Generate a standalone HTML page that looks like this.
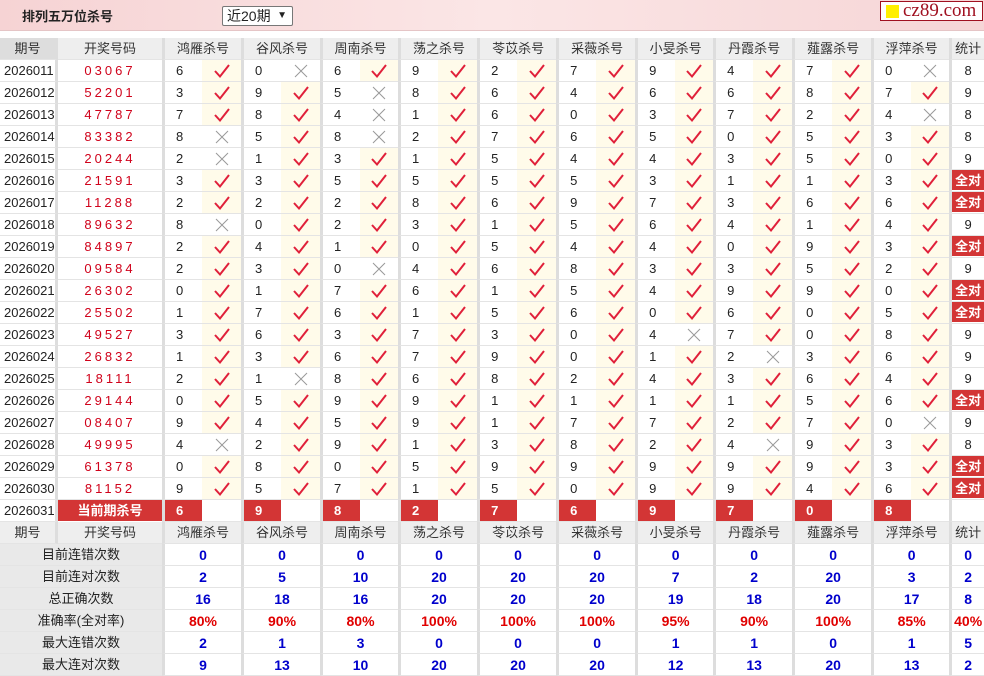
<!DOCTYPE html>
<html><head><meta charset="utf-8">
<style>
*{margin:0;padding:0;box-sizing:border-box}
body{width:984px;height:676px;background:#fff;font-family:"Liberation Sans","Noto Sans CJK SC",sans-serif;font-size:13px;color:#222;overflow:hidden;position:relative}
.bar{position:absolute;left:0;top:0;width:984px;height:31px;background:linear-gradient(90deg,#f6d3d4,#fbe6e6 50%,#f6d5d6);border-bottom:1px solid #e5c5c6}
.title{position:absolute;left:22px;top:6px;font-weight:bold;font-size:13px;color:#222}
.sel{position:absolute;left:222px;top:6px;width:71px;height:20px;border:1px solid #777;background:#fff;border-radius:2px;font-size:14px;padding-left:4px;line-height:18px}
.sel b{position:absolute;right:5px;top:0;font-size:10px}
.logo{position:absolute;left:880px;top:1px;width:103px;height:20px;border:1px solid #a01020;background:#fff;font-family:"Liberation Serif",serif;font-size:19px;color:#a01020;line-height:18px;padding-left:22px}
.logo i{position:absolute;left:5px;top:3px;width:13px;height:13px;background:#ffef00}
table{position:absolute;left:0;top:38px;border-collapse:separate;border-spacing:0;table-layout:fixed;width:984px}
tr{height:22px}
td{height:22px;border-bottom:1px solid #e4e4e4;text-align:center;padding:0;white-space:nowrap;line-height:20px;overflow:hidden}
td.g{border-left:3px solid #ddd;text-align:left;padding-left:11px}
td.m{background:#fffbea}
td.x{background:#fff}
td.q{color:#d0021b;letter-spacing:3px}
td.p{border-right:3px solid #ddd;text-align:left;padding-left:4px}
tr.h td{background:#eee;color:#333}
tr.h td.g{text-align:center;padding-left:0}
tr.h td.p{background:#ddd;text-align:center;padding-left:0}
td.t{border-left:3px solid #ddd}
td.qd{background:#d33535;color:#fff;font-weight:bold;box-shadow:inset 0 -1px 0 #fff}
td.r{background:#d33535;color:#fff;font-weight:bold}
td.cur{background:#d33535;color:#fff;font-weight:bold;border-bottom:1px solid #fff}
td.lab{background:#e9e9e9;padding-left:0}
td.v{border-left:3px solid #ddd;color:#0000cc;font-weight:bold;font-size:14px}
td.vr{border-left:3px solid #ddd;color:#e00000;font-weight:bold;font-size:14px}
td svg{vertical-align:middle;display:inline-block}
</style></head><body>
<div class="bar"></div>
<div class="title">排列五万位杀号</div>
<div class="sel">近20期<b>&#9660;</b></div>
<div class="logo"><i></i>cz89.com</div>
<svg width="0" height="0" style="position:absolute"><defs>
<symbol id="k" viewBox="0 0 20 16"><path d="M3 8 L8 13.5 L17 2" fill="none" stroke="#e0203a" stroke-width="2"/></symbol>
<symbol id="c" viewBox="0 0 16 16"><path d="M2 2 L14 14 M14 2 L2 14" fill="none" stroke="#999" stroke-width="1"/></symbol>
</defs></svg>
<table>
<colgroup><col style="width:58px"><col style="width:104px"><col style="width:40px"><col style="width:39px"><col style="width:40px"><col style="width:39px"><col style="width:40px"><col style="width:38px"><col style="width:40px"><col style="width:39px"><col style="width:40px"><col style="width:39px"><col style="width:40px"><col style="width:39px"><col style="width:40px"><col style="width:38px"><col style="width:40px"><col style="width:39px"><col style="width:40px"><col style="width:39px"><col style="width:40px"><col style="width:38px"><col style="width:35px"></colgroup>
<tr class="h"><td class="p">期号</td><td>开奖号码</td><td class="g" colspan="2">鸿雁杀号</td><td class="g" colspan="2">谷风杀号</td><td class="g" colspan="2">周南杀号</td><td class="g" colspan="2">荡之杀号</td><td class="g" colspan="2">苓苡杀号</td><td class="g" colspan="2">采薇杀号</td><td class="g" colspan="2">小旻杀号</td><td class="g" colspan="2">丹霞杀号</td><td class="g" colspan="2">薤露杀号</td><td class="g" colspan="2">浮萍杀号</td><td class="t">统计</td></tr>
<tr><td class="p">2026011</td><td class="q">03067</td><td class="g">6</td><td class="m"><svg width="20" height="16"><use href="#k"/></svg></td><td class="g">0</td><td class="x"><svg width="16" height="16"><use href="#c"/></svg></td><td class="g">6</td><td class="m"><svg width="20" height="16"><use href="#k"/></svg></td><td class="g">9</td><td class="m"><svg width="20" height="16"><use href="#k"/></svg></td><td class="g">2</td><td class="m"><svg width="20" height="16"><use href="#k"/></svg></td><td class="g">7</td><td class="m"><svg width="20" height="16"><use href="#k"/></svg></td><td class="g">9</td><td class="m"><svg width="20" height="16"><use href="#k"/></svg></td><td class="g">4</td><td class="m"><svg width="20" height="16"><use href="#k"/></svg></td><td class="g">7</td><td class="m"><svg width="20" height="16"><use href="#k"/></svg></td><td class="g">0</td><td class="x"><svg width="16" height="16"><use href="#c"/></svg></td><td class="t">8</td></tr>
<tr><td class="p">2026012</td><td class="q">52201</td><td class="g">3</td><td class="m"><svg width="20" height="16"><use href="#k"/></svg></td><td class="g">9</td><td class="m"><svg width="20" height="16"><use href="#k"/></svg></td><td class="g">5</td><td class="x"><svg width="16" height="16"><use href="#c"/></svg></td><td class="g">8</td><td class="m"><svg width="20" height="16"><use href="#k"/></svg></td><td class="g">6</td><td class="m"><svg width="20" height="16"><use href="#k"/></svg></td><td class="g">4</td><td class="m"><svg width="20" height="16"><use href="#k"/></svg></td><td class="g">6</td><td class="m"><svg width="20" height="16"><use href="#k"/></svg></td><td class="g">6</td><td class="m"><svg width="20" height="16"><use href="#k"/></svg></td><td class="g">8</td><td class="m"><svg width="20" height="16"><use href="#k"/></svg></td><td class="g">7</td><td class="m"><svg width="20" height="16"><use href="#k"/></svg></td><td class="t">9</td></tr>
<tr><td class="p">2026013</td><td class="q">47787</td><td class="g">7</td><td class="m"><svg width="20" height="16"><use href="#k"/></svg></td><td class="g">8</td><td class="m"><svg width="20" height="16"><use href="#k"/></svg></td><td class="g">4</td><td class="x"><svg width="16" height="16"><use href="#c"/></svg></td><td class="g">1</td><td class="m"><svg width="20" height="16"><use href="#k"/></svg></td><td class="g">6</td><td class="m"><svg width="20" height="16"><use href="#k"/></svg></td><td class="g">0</td><td class="m"><svg width="20" height="16"><use href="#k"/></svg></td><td class="g">3</td><td class="m"><svg width="20" height="16"><use href="#k"/></svg></td><td class="g">7</td><td class="m"><svg width="20" height="16"><use href="#k"/></svg></td><td class="g">2</td><td class="m"><svg width="20" height="16"><use href="#k"/></svg></td><td class="g">4</td><td class="x"><svg width="16" height="16"><use href="#c"/></svg></td><td class="t">8</td></tr>
<tr><td class="p">2026014</td><td class="q">83382</td><td class="g">8</td><td class="x"><svg width="16" height="16"><use href="#c"/></svg></td><td class="g">5</td><td class="m"><svg width="20" height="16"><use href="#k"/></svg></td><td class="g">8</td><td class="x"><svg width="16" height="16"><use href="#c"/></svg></td><td class="g">2</td><td class="m"><svg width="20" height="16"><use href="#k"/></svg></td><td class="g">7</td><td class="m"><svg width="20" height="16"><use href="#k"/></svg></td><td class="g">6</td><td class="m"><svg width="20" height="16"><use href="#k"/></svg></td><td class="g">5</td><td class="m"><svg width="20" height="16"><use href="#k"/></svg></td><td class="g">0</td><td class="m"><svg width="20" height="16"><use href="#k"/></svg></td><td class="g">5</td><td class="m"><svg width="20" height="16"><use href="#k"/></svg></td><td class="g">3</td><td class="m"><svg width="20" height="16"><use href="#k"/></svg></td><td class="t">8</td></tr>
<tr><td class="p">2026015</td><td class="q">20244</td><td class="g">2</td><td class="x"><svg width="16" height="16"><use href="#c"/></svg></td><td class="g">1</td><td class="m"><svg width="20" height="16"><use href="#k"/></svg></td><td class="g">3</td><td class="m"><svg width="20" height="16"><use href="#k"/></svg></td><td class="g">1</td><td class="m"><svg width="20" height="16"><use href="#k"/></svg></td><td class="g">5</td><td class="m"><svg width="20" height="16"><use href="#k"/></svg></td><td class="g">4</td><td class="m"><svg width="20" height="16"><use href="#k"/></svg></td><td class="g">4</td><td class="m"><svg width="20" height="16"><use href="#k"/></svg></td><td class="g">3</td><td class="m"><svg width="20" height="16"><use href="#k"/></svg></td><td class="g">5</td><td class="m"><svg width="20" height="16"><use href="#k"/></svg></td><td class="g">0</td><td class="m"><svg width="20" height="16"><use href="#k"/></svg></td><td class="t">9</td></tr>
<tr><td class="p">2026016</td><td class="q">21591</td><td class="g">3</td><td class="m"><svg width="20" height="16"><use href="#k"/></svg></td><td class="g">3</td><td class="m"><svg width="20" height="16"><use href="#k"/></svg></td><td class="g">5</td><td class="m"><svg width="20" height="16"><use href="#k"/></svg></td><td class="g">5</td><td class="m"><svg width="20" height="16"><use href="#k"/></svg></td><td class="g">5</td><td class="m"><svg width="20" height="16"><use href="#k"/></svg></td><td class="g">5</td><td class="m"><svg width="20" height="16"><use href="#k"/></svg></td><td class="g">3</td><td class="m"><svg width="20" height="16"><use href="#k"/></svg></td><td class="g">1</td><td class="m"><svg width="20" height="16"><use href="#k"/></svg></td><td class="g">1</td><td class="m"><svg width="20" height="16"><use href="#k"/></svg></td><td class="g">3</td><td class="m"><svg width="20" height="16"><use href="#k"/></svg></td><td class="t qd">全对</td></tr>
<tr><td class="p">2026017</td><td class="q">11288</td><td class="g">2</td><td class="m"><svg width="20" height="16"><use href="#k"/></svg></td><td class="g">2</td><td class="m"><svg width="20" height="16"><use href="#k"/></svg></td><td class="g">2</td><td class="m"><svg width="20" height="16"><use href="#k"/></svg></td><td class="g">8</td><td class="m"><svg width="20" height="16"><use href="#k"/></svg></td><td class="g">6</td><td class="m"><svg width="20" height="16"><use href="#k"/></svg></td><td class="g">9</td><td class="m"><svg width="20" height="16"><use href="#k"/></svg></td><td class="g">7</td><td class="m"><svg width="20" height="16"><use href="#k"/></svg></td><td class="g">3</td><td class="m"><svg width="20" height="16"><use href="#k"/></svg></td><td class="g">6</td><td class="m"><svg width="20" height="16"><use href="#k"/></svg></td><td class="g">6</td><td class="m"><svg width="20" height="16"><use href="#k"/></svg></td><td class="t qd">全对</td></tr>
<tr><td class="p">2026018</td><td class="q">89632</td><td class="g">8</td><td class="x"><svg width="16" height="16"><use href="#c"/></svg></td><td class="g">0</td><td class="m"><svg width="20" height="16"><use href="#k"/></svg></td><td class="g">2</td><td class="m"><svg width="20" height="16"><use href="#k"/></svg></td><td class="g">3</td><td class="m"><svg width="20" height="16"><use href="#k"/></svg></td><td class="g">1</td><td class="m"><svg width="20" height="16"><use href="#k"/></svg></td><td class="g">5</td><td class="m"><svg width="20" height="16"><use href="#k"/></svg></td><td class="g">6</td><td class="m"><svg width="20" height="16"><use href="#k"/></svg></td><td class="g">4</td><td class="m"><svg width="20" height="16"><use href="#k"/></svg></td><td class="g">1</td><td class="m"><svg width="20" height="16"><use href="#k"/></svg></td><td class="g">4</td><td class="m"><svg width="20" height="16"><use href="#k"/></svg></td><td class="t">9</td></tr>
<tr><td class="p">2026019</td><td class="q">84897</td><td class="g">2</td><td class="m"><svg width="20" height="16"><use href="#k"/></svg></td><td class="g">4</td><td class="m"><svg width="20" height="16"><use href="#k"/></svg></td><td class="g">1</td><td class="m"><svg width="20" height="16"><use href="#k"/></svg></td><td class="g">0</td><td class="m"><svg width="20" height="16"><use href="#k"/></svg></td><td class="g">5</td><td class="m"><svg width="20" height="16"><use href="#k"/></svg></td><td class="g">4</td><td class="m"><svg width="20" height="16"><use href="#k"/></svg></td><td class="g">4</td><td class="m"><svg width="20" height="16"><use href="#k"/></svg></td><td class="g">0</td><td class="m"><svg width="20" height="16"><use href="#k"/></svg></td><td class="g">9</td><td class="m"><svg width="20" height="16"><use href="#k"/></svg></td><td class="g">3</td><td class="m"><svg width="20" height="16"><use href="#k"/></svg></td><td class="t qd">全对</td></tr>
<tr><td class="p">2026020</td><td class="q">09584</td><td class="g">2</td><td class="m"><svg width="20" height="16"><use href="#k"/></svg></td><td class="g">3</td><td class="m"><svg width="20" height="16"><use href="#k"/></svg></td><td class="g">0</td><td class="x"><svg width="16" height="16"><use href="#c"/></svg></td><td class="g">4</td><td class="m"><svg width="20" height="16"><use href="#k"/></svg></td><td class="g">6</td><td class="m"><svg width="20" height="16"><use href="#k"/></svg></td><td class="g">8</td><td class="m"><svg width="20" height="16"><use href="#k"/></svg></td><td class="g">3</td><td class="m"><svg width="20" height="16"><use href="#k"/></svg></td><td class="g">3</td><td class="m"><svg width="20" height="16"><use href="#k"/></svg></td><td class="g">5</td><td class="m"><svg width="20" height="16"><use href="#k"/></svg></td><td class="g">2</td><td class="m"><svg width="20" height="16"><use href="#k"/></svg></td><td class="t">9</td></tr>
<tr><td class="p">2026021</td><td class="q">26302</td><td class="g">0</td><td class="m"><svg width="20" height="16"><use href="#k"/></svg></td><td class="g">1</td><td class="m"><svg width="20" height="16"><use href="#k"/></svg></td><td class="g">7</td><td class="m"><svg width="20" height="16"><use href="#k"/></svg></td><td class="g">6</td><td class="m"><svg width="20" height="16"><use href="#k"/></svg></td><td class="g">1</td><td class="m"><svg width="20" height="16"><use href="#k"/></svg></td><td class="g">5</td><td class="m"><svg width="20" height="16"><use href="#k"/></svg></td><td class="g">4</td><td class="m"><svg width="20" height="16"><use href="#k"/></svg></td><td class="g">9</td><td class="m"><svg width="20" height="16"><use href="#k"/></svg></td><td class="g">9</td><td class="m"><svg width="20" height="16"><use href="#k"/></svg></td><td class="g">0</td><td class="m"><svg width="20" height="16"><use href="#k"/></svg></td><td class="t qd">全对</td></tr>
<tr><td class="p">2026022</td><td class="q">25502</td><td class="g">1</td><td class="m"><svg width="20" height="16"><use href="#k"/></svg></td><td class="g">7</td><td class="m"><svg width="20" height="16"><use href="#k"/></svg></td><td class="g">6</td><td class="m"><svg width="20" height="16"><use href="#k"/></svg></td><td class="g">1</td><td class="m"><svg width="20" height="16"><use href="#k"/></svg></td><td class="g">5</td><td class="m"><svg width="20" height="16"><use href="#k"/></svg></td><td class="g">6</td><td class="m"><svg width="20" height="16"><use href="#k"/></svg></td><td class="g">0</td><td class="m"><svg width="20" height="16"><use href="#k"/></svg></td><td class="g">6</td><td class="m"><svg width="20" height="16"><use href="#k"/></svg></td><td class="g">0</td><td class="m"><svg width="20" height="16"><use href="#k"/></svg></td><td class="g">5</td><td class="m"><svg width="20" height="16"><use href="#k"/></svg></td><td class="t qd">全对</td></tr>
<tr><td class="p">2026023</td><td class="q">49527</td><td class="g">3</td><td class="m"><svg width="20" height="16"><use href="#k"/></svg></td><td class="g">6</td><td class="m"><svg width="20" height="16"><use href="#k"/></svg></td><td class="g">3</td><td class="m"><svg width="20" height="16"><use href="#k"/></svg></td><td class="g">7</td><td class="m"><svg width="20" height="16"><use href="#k"/></svg></td><td class="g">3</td><td class="m"><svg width="20" height="16"><use href="#k"/></svg></td><td class="g">0</td><td class="m"><svg width="20" height="16"><use href="#k"/></svg></td><td class="g">4</td><td class="x"><svg width="16" height="16"><use href="#c"/></svg></td><td class="g">7</td><td class="m"><svg width="20" height="16"><use href="#k"/></svg></td><td class="g">0</td><td class="m"><svg width="20" height="16"><use href="#k"/></svg></td><td class="g">8</td><td class="m"><svg width="20" height="16"><use href="#k"/></svg></td><td class="t">9</td></tr>
<tr><td class="p">2026024</td><td class="q">26832</td><td class="g">1</td><td class="m"><svg width="20" height="16"><use href="#k"/></svg></td><td class="g">3</td><td class="m"><svg width="20" height="16"><use href="#k"/></svg></td><td class="g">6</td><td class="m"><svg width="20" height="16"><use href="#k"/></svg></td><td class="g">7</td><td class="m"><svg width="20" height="16"><use href="#k"/></svg></td><td class="g">9</td><td class="m"><svg width="20" height="16"><use href="#k"/></svg></td><td class="g">0</td><td class="m"><svg width="20" height="16"><use href="#k"/></svg></td><td class="g">1</td><td class="m"><svg width="20" height="16"><use href="#k"/></svg></td><td class="g">2</td><td class="x"><svg width="16" height="16"><use href="#c"/></svg></td><td class="g">3</td><td class="m"><svg width="20" height="16"><use href="#k"/></svg></td><td class="g">6</td><td class="m"><svg width="20" height="16"><use href="#k"/></svg></td><td class="t">9</td></tr>
<tr><td class="p">2026025</td><td class="q">18111</td><td class="g">2</td><td class="m"><svg width="20" height="16"><use href="#k"/></svg></td><td class="g">1</td><td class="x"><svg width="16" height="16"><use href="#c"/></svg></td><td class="g">8</td><td class="m"><svg width="20" height="16"><use href="#k"/></svg></td><td class="g">6</td><td class="m"><svg width="20" height="16"><use href="#k"/></svg></td><td class="g">8</td><td class="m"><svg width="20" height="16"><use href="#k"/></svg></td><td class="g">2</td><td class="m"><svg width="20" height="16"><use href="#k"/></svg></td><td class="g">4</td><td class="m"><svg width="20" height="16"><use href="#k"/></svg></td><td class="g">3</td><td class="m"><svg width="20" height="16"><use href="#k"/></svg></td><td class="g">6</td><td class="m"><svg width="20" height="16"><use href="#k"/></svg></td><td class="g">4</td><td class="m"><svg width="20" height="16"><use href="#k"/></svg></td><td class="t">9</td></tr>
<tr><td class="p">2026026</td><td class="q">29144</td><td class="g">0</td><td class="m"><svg width="20" height="16"><use href="#k"/></svg></td><td class="g">5</td><td class="m"><svg width="20" height="16"><use href="#k"/></svg></td><td class="g">9</td><td class="m"><svg width="20" height="16"><use href="#k"/></svg></td><td class="g">9</td><td class="m"><svg width="20" height="16"><use href="#k"/></svg></td><td class="g">1</td><td class="m"><svg width="20" height="16"><use href="#k"/></svg></td><td class="g">1</td><td class="m"><svg width="20" height="16"><use href="#k"/></svg></td><td class="g">1</td><td class="m"><svg width="20" height="16"><use href="#k"/></svg></td><td class="g">1</td><td class="m"><svg width="20" height="16"><use href="#k"/></svg></td><td class="g">5</td><td class="m"><svg width="20" height="16"><use href="#k"/></svg></td><td class="g">6</td><td class="m"><svg width="20" height="16"><use href="#k"/></svg></td><td class="t qd">全对</td></tr>
<tr><td class="p">2026027</td><td class="q">08407</td><td class="g">9</td><td class="m"><svg width="20" height="16"><use href="#k"/></svg></td><td class="g">4</td><td class="m"><svg width="20" height="16"><use href="#k"/></svg></td><td class="g">5</td><td class="m"><svg width="20" height="16"><use href="#k"/></svg></td><td class="g">9</td><td class="m"><svg width="20" height="16"><use href="#k"/></svg></td><td class="g">1</td><td class="m"><svg width="20" height="16"><use href="#k"/></svg></td><td class="g">7</td><td class="m"><svg width="20" height="16"><use href="#k"/></svg></td><td class="g">7</td><td class="m"><svg width="20" height="16"><use href="#k"/></svg></td><td class="g">2</td><td class="m"><svg width="20" height="16"><use href="#k"/></svg></td><td class="g">7</td><td class="m"><svg width="20" height="16"><use href="#k"/></svg></td><td class="g">0</td><td class="x"><svg width="16" height="16"><use href="#c"/></svg></td><td class="t">9</td></tr>
<tr><td class="p">2026028</td><td class="q">49995</td><td class="g">4</td><td class="x"><svg width="16" height="16"><use href="#c"/></svg></td><td class="g">2</td><td class="m"><svg width="20" height="16"><use href="#k"/></svg></td><td class="g">9</td><td class="m"><svg width="20" height="16"><use href="#k"/></svg></td><td class="g">1</td><td class="m"><svg width="20" height="16"><use href="#k"/></svg></td><td class="g">3</td><td class="m"><svg width="20" height="16"><use href="#k"/></svg></td><td class="g">8</td><td class="m"><svg width="20" height="16"><use href="#k"/></svg></td><td class="g">2</td><td class="m"><svg width="20" height="16"><use href="#k"/></svg></td><td class="g">4</td><td class="x"><svg width="16" height="16"><use href="#c"/></svg></td><td class="g">9</td><td class="m"><svg width="20" height="16"><use href="#k"/></svg></td><td class="g">3</td><td class="m"><svg width="20" height="16"><use href="#k"/></svg></td><td class="t">8</td></tr>
<tr><td class="p">2026029</td><td class="q">61378</td><td class="g">0</td><td class="m"><svg width="20" height="16"><use href="#k"/></svg></td><td class="g">8</td><td class="m"><svg width="20" height="16"><use href="#k"/></svg></td><td class="g">0</td><td class="m"><svg width="20" height="16"><use href="#k"/></svg></td><td class="g">5</td><td class="m"><svg width="20" height="16"><use href="#k"/></svg></td><td class="g">9</td><td class="m"><svg width="20" height="16"><use href="#k"/></svg></td><td class="g">9</td><td class="m"><svg width="20" height="16"><use href="#k"/></svg></td><td class="g">9</td><td class="m"><svg width="20" height="16"><use href="#k"/></svg></td><td class="g">9</td><td class="m"><svg width="20" height="16"><use href="#k"/></svg></td><td class="g">9</td><td class="m"><svg width="20" height="16"><use href="#k"/></svg></td><td class="g">3</td><td class="m"><svg width="20" height="16"><use href="#k"/></svg></td><td class="t qd">全对</td></tr>
<tr><td class="p">2026030</td><td class="q">81152</td><td class="g">9</td><td class="m"><svg width="20" height="16"><use href="#k"/></svg></td><td class="g">5</td><td class="m"><svg width="20" height="16"><use href="#k"/></svg></td><td class="g">7</td><td class="m"><svg width="20" height="16"><use href="#k"/></svg></td><td class="g">1</td><td class="m"><svg width="20" height="16"><use href="#k"/></svg></td><td class="g">5</td><td class="m"><svg width="20" height="16"><use href="#k"/></svg></td><td class="g">0</td><td class="m"><svg width="20" height="16"><use href="#k"/></svg></td><td class="g">9</td><td class="m"><svg width="20" height="16"><use href="#k"/></svg></td><td class="g">9</td><td class="m"><svg width="20" height="16"><use href="#k"/></svg></td><td class="g">4</td><td class="m"><svg width="20" height="16"><use href="#k"/></svg></td><td class="g">6</td><td class="m"><svg width="20" height="16"><use href="#k"/></svg></td><td class="t qd">全对</td></tr>
<tr><td class="p">2026031</td><td class="cur">当前期杀号</td><td class="g r">6</td><td></td><td class="g r">9</td><td></td><td class="g r">8</td><td></td><td class="g r">2</td><td></td><td class="g r">7</td><td></td><td class="g r">6</td><td></td><td class="g r">9</td><td></td><td class="g r">7</td><td></td><td class="g r">0</td><td></td><td class="g r">8</td><td></td><td class="t"></td></tr>
<tr class="h"><td class="p" style="background:#eee">期号</td><td>开奖号码</td><td class="g" colspan="2">鸿雁杀号</td><td class="g" colspan="2">谷风杀号</td><td class="g" colspan="2">周南杀号</td><td class="g" colspan="2">荡之杀号</td><td class="g" colspan="2">苓苡杀号</td><td class="g" colspan="2">采薇杀号</td><td class="g" colspan="2">小旻杀号</td><td class="g" colspan="2">丹霞杀号</td><td class="g" colspan="2">薤露杀号</td><td class="g" colspan="2">浮萍杀号</td><td class="t">统计</td></tr>
<tr><td class="lab" colspan="2">目前连错次数</td><td class="v" colspan="2">0</td><td class="v" colspan="2">0</td><td class="v" colspan="2">0</td><td class="v" colspan="2">0</td><td class="v" colspan="2">0</td><td class="v" colspan="2">0</td><td class="v" colspan="2">0</td><td class="v" colspan="2">0</td><td class="v" colspan="2">0</td><td class="v" colspan="2">0</td><td class="v">0</td></tr>
<tr><td class="lab" colspan="2">目前连对次数</td><td class="v" colspan="2">2</td><td class="v" colspan="2">5</td><td class="v" colspan="2">10</td><td class="v" colspan="2">20</td><td class="v" colspan="2">20</td><td class="v" colspan="2">20</td><td class="v" colspan="2">7</td><td class="v" colspan="2">2</td><td class="v" colspan="2">20</td><td class="v" colspan="2">3</td><td class="v">2</td></tr>
<tr><td class="lab" colspan="2">总正确次数</td><td class="v" colspan="2">16</td><td class="v" colspan="2">18</td><td class="v" colspan="2">16</td><td class="v" colspan="2">20</td><td class="v" colspan="2">20</td><td class="v" colspan="2">20</td><td class="v" colspan="2">19</td><td class="v" colspan="2">18</td><td class="v" colspan="2">20</td><td class="v" colspan="2">17</td><td class="v">8</td></tr>
<tr><td class="lab" colspan="2">准确率(全对率)</td><td class="vr" colspan="2">80%</td><td class="vr" colspan="2">90%</td><td class="vr" colspan="2">80%</td><td class="vr" colspan="2">100%</td><td class="vr" colspan="2">100%</td><td class="vr" colspan="2">100%</td><td class="vr" colspan="2">95%</td><td class="vr" colspan="2">90%</td><td class="vr" colspan="2">100%</td><td class="vr" colspan="2">85%</td><td class="vr">40%</td></tr>
<tr><td class="lab" colspan="2">最大连错次数</td><td class="v" colspan="2">2</td><td class="v" colspan="2">1</td><td class="v" colspan="2">3</td><td class="v" colspan="2">0</td><td class="v" colspan="2">0</td><td class="v" colspan="2">0</td><td class="v" colspan="2">1</td><td class="v" colspan="2">1</td><td class="v" colspan="2">0</td><td class="v" colspan="2">1</td><td class="v">5</td></tr>
<tr><td class="lab" colspan="2">最大连对次数</td><td class="v" colspan="2">9</td><td class="v" colspan="2">13</td><td class="v" colspan="2">10</td><td class="v" colspan="2">20</td><td class="v" colspan="2">20</td><td class="v" colspan="2">20</td><td class="v" colspan="2">12</td><td class="v" colspan="2">13</td><td class="v" colspan="2">20</td><td class="v" colspan="2">13</td><td class="v">2</td></tr>
</table>
</body></html>
